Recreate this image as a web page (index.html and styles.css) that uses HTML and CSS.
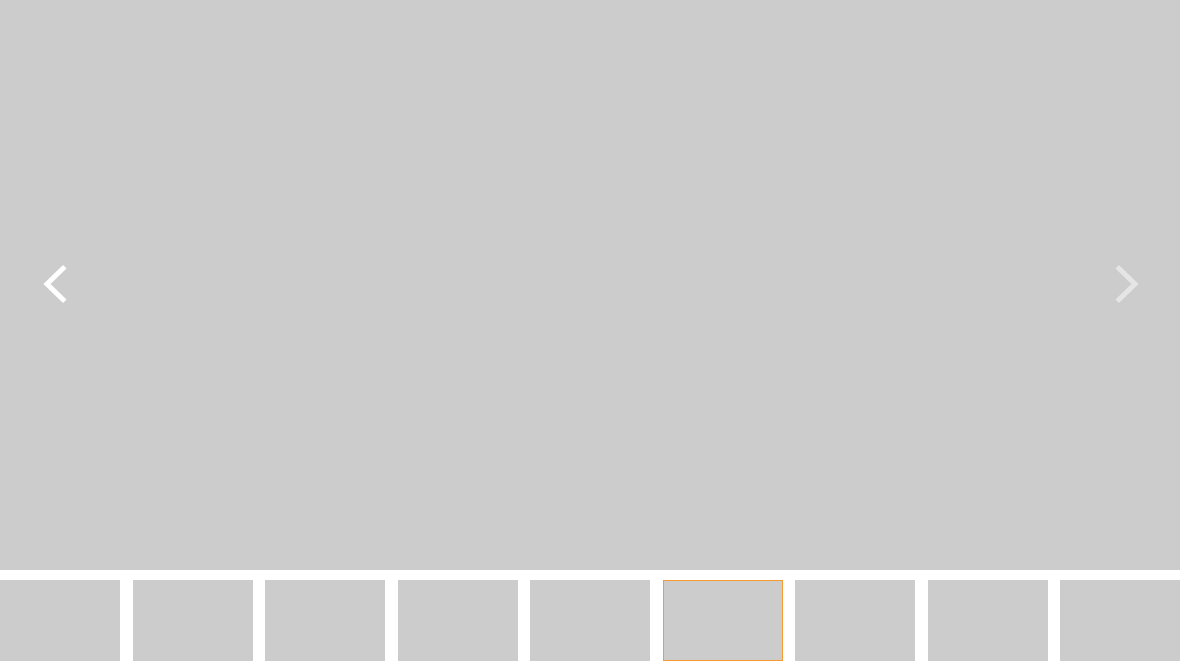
FILE: index.html
```html
<!DOCTYPE html>
<html>
<head>
<meta charset="utf-8">
<link rel="stylesheet" href="styles.css">
</head>
<body>
<div class="gallery">
  <div class="main">
    <div class="nav prev">
      <svg width="30" height="44" viewBox="0 0 30 44"><polyline points="23,6.5 7,22 23,37.5" fill="none" stroke="#fff" stroke-width="5" stroke-linecap="square" stroke-linejoin="miter"/></svg>
    </div>
    <div class="nav next">
      <svg width="30" height="44" viewBox="0 0 30 44"><polyline points="7,6.5 23,22 7,37.5" fill="none" stroke="#fff" stroke-width="5" stroke-linecap="square" stroke-linejoin="miter"/></svg>
    </div>
  </div>
  <div class="thumbs">
    <div class="thumb"></div>
    <div class="thumb"></div>
    <div class="thumb"></div>
    <div class="thumb"></div>
    <div class="thumb"></div>
    <div class="thumb active"></div>
    <div class="thumb"></div>
    <div class="thumb"></div>
    <div class="thumb"></div>
  </div>
</div>
</body>
</html>
```
FILE: styles.css
```css
html, body {
  margin: 0;
  padding: 0;
  background: #fff;
  overflow: hidden;
}
.gallery {
  display: flex;
  flex-direction: column;
  gap: 10px;
  width: 1180px;
}
.main {
  position: relative;
  height: 570px;
  background: #ccc;
}
.nav {
  position: absolute;
  top: 262px;
  width: 30px;
  height: 44px;
}
.nav svg { display: block; }
.prev { left: 40px; }
.next { right: 38px; opacity: 0.5; }
.thumbs {
  display: flex;
  gap: 12.5px;
  height: 81px;
}
.thumb {
  flex: 0 0 120px;
  height: 81px;
  background: #ccc;
  box-sizing: border-box;
}
.thumb.active {
  border: 1.5px solid #f99a30;
}
```
